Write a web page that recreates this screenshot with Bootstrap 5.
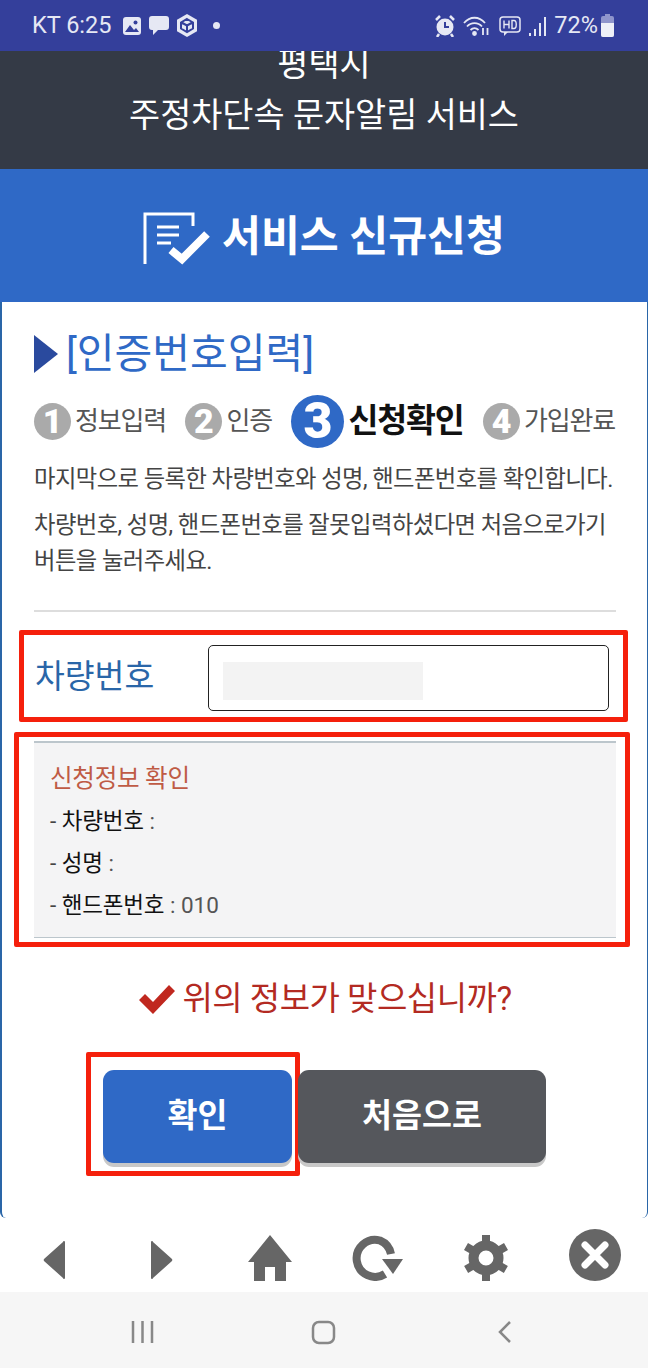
<!DOCTYPE html>
<html lang="ko">
<head>
<meta charset="UTF-8">
<meta name="viewport" content="width=device-width, initial-scale=1.0">
<title>서비스 신규신청</title>
<link href="https://cdn.jsdelivr.net/npm/bootstrap@5.3.0/dist/css/bootstrap.min.css" rel="stylesheet">
<style>
html, body { height: 1368px; overflow: hidden; }
body { font-family: Roboto, "Noto Sans CJK KR", sans-serif; color: #444; background: #fff; }
.status-bar { height: 51px; background: #343f9b; color: #e6e8f4; font-size: 23.5px; padding: 0 34px 0 32px; }
.city-bar { height: 118px; background: #343a46; color: #fff; font-size: 33.8px; line-height: 51px; overflow: hidden; }
.city-bar div:first-child { margin-top: -12px; }
.title-bar { height: 133px; background: #2f69c6; color: #fff; font-size: 42.3px; font-weight: 700; gap: 9px; padding-top: 2px; }
.content-area { height: 916px; border-left: 2px solid #2a66a8; border-right: 1px solid #2a66a8; padding: 28px 31px 0 32px; border-radius: 0 0 6px 6px; }
.page-heading { height: 48px; color: #2f69c6; font-size: 41px; line-height: 48px; gap: 8px; }
.heading-arrow { width: 0; height: 0; border-left: 24px solid #2a4a9e; border-top: 19px solid transparent; border-bottom: 19px solid transparent; }
.step-row { height: 56px; margin-top: 15px; font-size: 26px; color: #555; letter-spacing: -1.2px; padding-right: 1px; }
.step-item { gap: 4px; }
.step-num { width: 37px; height: 37px; border-radius: 50%; background: #aaa; color: #fff; font-size: 34px; font-weight: 900; line-height: 37px; text-align: center; letter-spacing: 0; }
.step-now { color: #111; font-size: 32.6px; font-weight: 700; }
.step-now .step-num { width: 53px; height: 53px; background: #2f69c6; font-size: 50px; line-height: 53px; }
.intro-text { font-size: 23.3px; line-height: 36px; color: #444; margin: 12px 0 0; letter-spacing: -.55px; white-space: nowrap; }
.intro-text + .intro-text { margin-top: 10px; }
.divider { height: 2px; background: #ddd; margin-top: 31px; }
.red-box { border: 5px solid #f5200c; border-radius: 2px; }
.car-box { height: 92px; margin: 18px -12px 0 -15px; padding: 10px 14px 0 11px; }
.car-label { width: 173px; color: #2a66a8; font-size: 32.4px; padding-top: 8px; }
.car-input { height: 66px; border: 1px solid #222; border-radius: 5px; padding: 16px 14px; background: #fff; }
.car-mask { width: 200px; height: 38px; background: #f3f3f3; }
.info-box { height: 215px; margin: 10px -14px 0 -20px; padding: 4px 9px 4px 15px; }
.info-panel { height: 197px; background: #f4f4f5; border-top: 2px solid #bcc6cc; border-bottom: 1px solid #bcc6cc; padding: 20px 16px 0; font-size: 22.5px; }
.info-title { color: #bf5b45; font-size: 24.6px; line-height: 32px; letter-spacing: -.3px; }
.info-line { line-height: 32px; margin-top: 10px; }
.info-line b { color: #111; font-weight: 400; letter-spacing: -.2px; }
.info-line span { color: #555; }
.confirm-line { height: 44px; margin-top: 30px; color: #b32a22; font-size: 33px; line-height: 44px; gap: 6px; letter-spacing: -.5px; }
.button-row { margin: 31px 0 0 52px; height: 124px; }
.confirm-box { width: 214px; height: 124px; padding: 13px 3px 0 12px; }
.form-btn { height: 93px; border: 0; border-radius: 11px; color: #fff; font-size: 32.6px; font-weight: 700; box-shadow: 0 4px 0 #c8c8c8; }
.form-btn:hover, .form-btn:active { color: #fff; }
.btn-ok { width: 189px; background: #2f69c6; }
.btn-ok:hover { background: #2f69c6; }
.btn-first { width: 248px; margin: 18px 0 0 -2px; background: #55575c; }
.btn-first:hover { background: #55575c; }
.tool-bar { height: 74px; background: #fff; padding: 0 0 11px 43px; gap: 60px; }
.tool-back { margin-right: 26px; margin-bottom: 2px; }
.tool-next { margin-right: 15px; margin-bottom: 2px; }
.nav-bar { height: 76px; background: #f6f6f6; padding: 4px 0 0 131px; }
.nav-lines { margin-right: 157px; }
.nav-home { margin-right: 162px; }
</style>
</head>
<body>
<header class="status-bar d-flex align-items-center justify-content-between">
  <div class="d-flex align-items-center gap-2">
    <span>KT 6:25</span>
    <svg class="ms-1" width="18" height="18" viewBox="0 0 18 18"><rect width="18" height="18" rx="3" fill="#e6e8f4"/><circle cx="12.500" cy="5.500" r="2" fill="#343f9b"/><path d="M2 15l5-7 4 5 2-2 3 4z" fill="#343f9b"/></svg>
    <svg width="20" height="21" viewBox="0 0 20 21"><path d="M3 1h14a3 3 0 0 1 3 3v8a3 3 0 0 1-3 3H9l-5 5v-5H3a3 3 0 0 1-3-3V4a3 3 0 0 1 3-3z" fill="#e6e8f4"/></svg>
    <svg width="20" height="23" viewBox="0 0 20 23"><path d="M10 0l10 5.700v11.600L10 23 0 17.300V5.700z" fill="#e6e8f4"/><path d="M10 5l6 3.500v6L10 18l-6-3.500v-6zM10 11.500v6M4.500 8.500l5.500 3 5.500-3" fill="none" stroke="#343f9b" stroke-width="2"/></svg>
    <span class="ms-2 rounded-circle d-block" style="width:7px;height:7px;background:#e6e8f4"></span>
  </div>
  <div class="d-flex align-items-center gap-2">
    <svg width="20" height="22" viewBox="0 0 20 22"><circle cx="10" cy="12" r="8.500" fill="#e6e8f4"/><path d="M10 7v5h4" fill="none" stroke="#343f9b" stroke-width="2"/><path d="M1 5l4-4M19 5l-4-4M4 19l-2 3M16 19l2 3" stroke="#e6e8f4" stroke-width="2.500"/></svg>
    <svg width="28" height="22" viewBox="0 0 28 22" fill="none" stroke="#e6e8f4" stroke-width="1.800"><path d="M1 8c6-7 15-7 21 0M4 11.500c4-4.500 11-4.500 15 0M7.500 15c2.500-2.500 5.500-2.500 8 0"/><circle cx="11.500" cy="18.500" r="1.500" fill="#e6e8f4"/><path d="M20 13v7M24.500 20v-7"/></svg>
    <svg width="22" height="20" viewBox="0 0 22 20"><rect x="1" y="1" width="20" height="15" rx="3" fill="none" stroke="#e6e8f4" stroke-width="1.500"/><path d="M5 4.500v8M10 4.500v8M5 8.500h5M13 4.500v8h2c3 0 3-8 0-8z" fill="none" stroke="#e6e8f4" stroke-width="1.400"/><path d="M5 16v4l4-4z" fill="#e6e8f4"/></svg>
    <svg width="17" height="20" viewBox="0 0 17 20" fill="#e6e8f4"><rect x="0" y="17" width="2" height="3"/><rect x="5" y="13" width="2" height="7"/><rect x="10" y="7" width="2" height="13"/><rect x="15" y="1" width="2" height="19"/></svg>
    <span>72%</span>
    <svg width="13" height="23" viewBox="0 0 13 23" style="margin-left:-5px"><path d="M4 0h5v2h2a2 2 0 0 1 2 2v17a2 2 0 0 1-2 2H2a2 2 0 0 1-2-2V4a2 2 0 0 1 2-2h2z" fill="#8f95cc"/><path d="M0 9h13v12a2 2 0 0 1-2 2H2a2 2 0 0 1-2-2z" fill="#eef0f8"/></svg>
  </div>
</header>

<div class="city-bar text-center">
  <div>평택시</div>
  <div>주정차단속 문자알림 서비스</div>
</div>

<div class="title-bar d-flex align-items-center justify-content-center">
  <svg width="70" height="56" viewBox="0 0 70 56" fill="none" stroke="#fff" stroke-width="3"><path d="M2 55V5h48v12"/><path d="M14 18h22M14 26h22M14 34h14"/><path d="M28 41l11 9 25-25" stroke-width="8"/></svg>
  <span>서비스 신규신청</span>
</div>

<main class="content-area">
  <div class="page-heading d-flex align-items-center">
    <span class="heading-arrow"></span>
    <span>[인증번호입력]</span>
  </div>

  <div class="step-row d-flex align-items-center justify-content-between">
    <div class="step-item d-flex align-items-center"><span class="step-num">1</span>정보입력</div>
    <div class="step-item d-flex align-items-center"><span class="step-num">2</span>인증</div>
    <div class="step-item step-now d-flex align-items-center"><span class="step-num">3</span>신청확인</div>
    <div class="step-item d-flex align-items-center"><span class="step-num">4</span>가입완료</div>
  </div>

  <p class="intro-text">마지막으로 등록한 차량번호와 성명, 핸드폰번호를 확인합니다.</p>
  <p class="intro-text">차량번호, 성명, 핸드폰번호를 잘못입력하셨다면 처음으로가기<br>버튼을 눌러주세요.</p>
  <div class="divider"></div>

  <div class="red-box car-box d-flex">
    <div class="car-label flex-shrink-0">차량번호</div>
    <div class="car-input flex-grow-1"><div class="car-mask"></div></div>
  </div>

  <div class="red-box info-box">
    <div class="info-panel">
      <div class="info-title">신청정보 확인</div>
      <div class="info-line">- <b>차량번호</b> <span>:</span></div>
      <div class="info-line">- <b>성명</b> <span>:</span></div>
      <div class="info-line">- <b>핸드폰번호</b> <span>: 010</span></div>
    </div>
  </div>

  <div class="confirm-line d-flex align-items-center justify-content-center">
    <svg width="38" height="32" viewBox="0 0 38 32"><path d="M1 17l6-6 8 8L31 2l6 6-22 23z" fill="#c0281f"/></svg>
    <span>위의 정보가 맞으십니까?</span>
  </div>

  <div class="button-row d-flex">
    <div class="red-box confirm-box"><button type="button" class="btn form-btn btn-ok">확인</button></div>
    <button type="button" class="btn form-btn btn-first">처음으로</button>
  </div>
</main>

<nav class="tool-bar d-flex align-items-end">
  <svg class="tool-back" width="22" height="38" viewBox="0 0 22 38"><path d="M22 1v36a1 1 0 0 1-2 0L1 20a2 2 0 0 1 0-2L20 1a1 1 0 0 1 2 0z" fill="#666"/></svg>
  <svg class="tool-next" width="22" height="38" viewBox="0 0 22 38"><path d="M0 1v36a1 1 0 0 0 2 0l19-17a2 2 0 0 0 0-2L2 1a1 1 0 0 0-2 0z" fill="#666"/></svg>
  <svg width="44" height="46" viewBox="0 0 44 46"><path d="M22 0l22 27h-6v19H27V32H17v14H6V27H0z" fill="#666"/></svg>
  <svg width="51" height="46" viewBox="0 0 51 46"><path d="M33 39A18.500 18.500 0 1 1 28 5.500 18.500 18.500 0 0 1 39 19" fill="none" stroke="#666" stroke-width="8"/><path d="M30 24h21L41 39z" fill="#666"/></svg>
  <svg width="46" height="46" viewBox="0 0 46 46"><circle cx="23" cy="23" r="12.500" fill="none" stroke="#666" stroke-width="10"/><path d="M23 0v46M3 11.500l40 23M43 11.500l-40 23" stroke="#666" stroke-width="8" stroke-dasharray="8 30"/></svg>
  <svg width="52" height="52" viewBox="0 0 52 52"><circle cx="26" cy="26" r="26" fill="#666"/><path d="M16 16l20 20M36 16L16 36" stroke="#fff" stroke-width="7" stroke-linecap="round"/></svg>
</nav>

<footer class="nav-bar d-flex align-items-center">
  <svg class="nav-lines" width="23" height="24" viewBox="0 0 23 24" stroke="#888" stroke-width="2.500"><path d="M2 1v22M11.500 1v22M21 1v22"/></svg>
  <svg class="nav-home" width="25" height="25" viewBox="0 0 25 25"><rect x="2" y="2" width="21" height="21" rx="6" fill="none" stroke="#888" stroke-width="2.500"/></svg>
  <svg width="14" height="24" viewBox="0 0 14 24"><path d="M12 2L2 12l10 10" fill="none" stroke="#888" stroke-width="2.500"/></svg>
</footer>
</body>
</html>
